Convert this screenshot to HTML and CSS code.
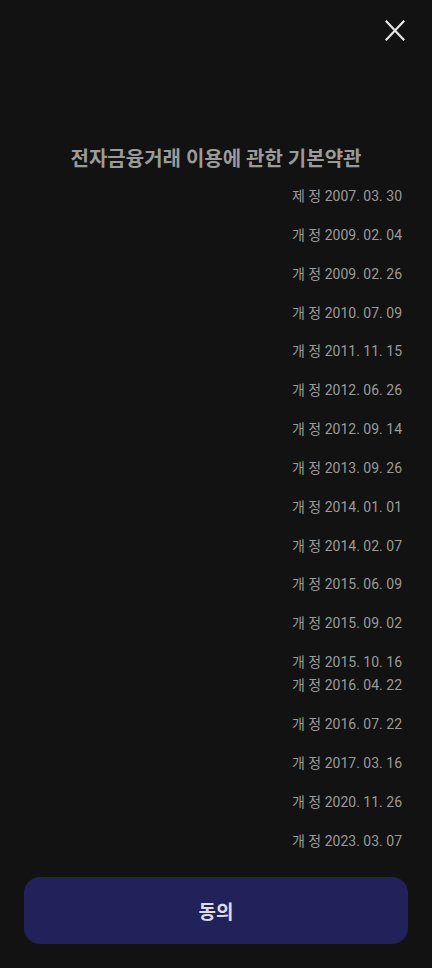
FILE: index.html
```html
<!DOCTYPE html>
<html lang="ko">
<head>
    <meta charset="UTF-8">
    <meta name="viewport" content="width=device-width, initial-scale=1.0">
    <title>전자금융거래 이용에 관한 기본약관</title>
    <link rel="stylesheet" href="styles.css">
</head>
<body>
    <div class="terms-page">
        <div class="top-bar">
            <button class="close-btn" aria-label="닫기">
                <svg width="20" height="21" viewBox="0 0 20 21">
                    <path d="M1.5 1.5 L18.5 19.5 M18.5 1.5 L1.5 19.5" stroke="#e6e6e6" stroke-width="2.2" stroke-linecap="square" fill="none"/>
                </svg>
            </button>
        </div>

        <h2 class="terms-title">전자금융거래 이용에 관한 기본약관</h2>

        <div class="history">
            <p>제 정 2007. 03. 30</p>
            <p>개 정 2009. 02. 04</p>
            <p>개 정 2009. 02. 26</p>
            <p>개 정 2010. 07. 09</p>
            <p>개 정 2011. 11. 15</p>
            <p>개 정 2012. 06. 26</p>
            <p>개 정 2012. 09. 14</p>
            <p>개 정 2013. 09. 26</p>
            <p>개 정 2014. 01. 01</p>
            <p>개 정 2014. 02. 07</p>
            <p>개 정 2015. 06. 09</p>
            <p>개 정 2015. 09. 02</p>
            <p>개 정 2015. 10. 16<br>개 정 2016. 04. 22</p>
            <p>개 정 2016. 07. 22</p>
            <p>개 정 2017. 03. 16</p>
            <p>개 정 2020. 11. 26</p>
            <p>개 정 2023. 03. 07</p>
        </div>

        <div class="bottom">
            <button class="agree-btn">동의</button>
        </div>
    </div>
</body>
</html>
```

FILE: styles.css
```css
body {
    margin: 0;
    background-color: #121212;
    font-family: Roboto, "Noto Sans CJK KR", sans-serif;
}
.terms-page {
    height: 968px;
    display: flex;
    flex-direction: column;
}
.top-bar {
    display: flex;
    justify-content: flex-end;
    padding: 20px 27px 0;
}
.close-btn {
    background: none;
    border: none;
    padding: 0;
    width: 20px;
    height: 21px;
    cursor: pointer;
}
.close-btn svg {
    display: block;
}
.terms-title {
    margin: 105px 0 0;
    text-align: center;
    font-size: 20px;
    line-height: 26px;
    font-weight: bold;
    color: #9b9b9b;
}
.history {
    margin-top: 13px;
    padding-right: 30px;
    text-align: right;
    display: flex;
    flex-direction: column;
    gap: 15.85px;
}
.history p {
    margin: 0;
    font-size: 14px;
    line-height: 23px;
    color: #9a9a9a;
}
.bottom {
    margin-top: auto;
    padding: 0 24px 24px;
}
.agree-btn {
    width: 100%;
    height: 67px;
    border: none;
    border-radius: 16px;
    background-color: #22225a;
    color: #dcdce4;
    font-family: Roboto, "Noto Sans CJK KR", sans-serif;
    font-size: 19px;
    font-weight: bold;
    cursor: pointer;
}
```
